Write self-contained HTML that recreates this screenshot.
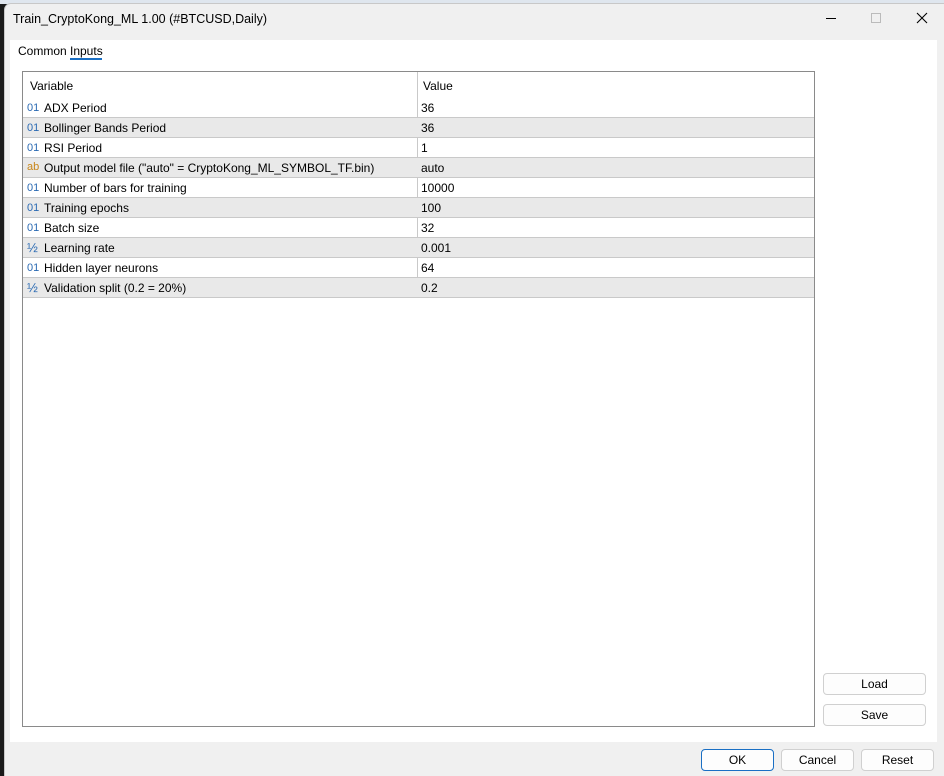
<!DOCTYPE html>
<html><head><meta charset="utf-8"><style>
*{box-sizing:border-box;margin:0;padding:0}
body{width:944px;height:776px;position:relative;overflow:hidden;background:#1a1a1a;font-family:"Liberation Sans",Arial,sans-serif;font-size:12px;color:#000}
.top{position:absolute;left:0;top:0;width:944px;height:4px;background:#dfe6ee}
.win{position:absolute;left:4px;top:3px;width:940px;height:773px;background:#f0f0f0;border-top-left-radius:7px;border:1px solid #c8c8c8;border-right:none;border-bottom:none}
.title{position:absolute;left:13px;top:12px;font-size:12.5px}
.panel{position:absolute;left:10px;top:40px;width:927px;height:702px;background:#fff}
.tab{position:absolute;top:44px;font-size:12px}
.ul{position:absolute;left:70px;top:58px;width:32px;height:2px;background:#1a6fc4}
.table{position:absolute;left:22px;top:71px;width:793px;height:656px;border:1px solid #8a8a8a;background:#fff}
.hdr{height:25px;position:relative}
.hdr span{position:absolute;top:7px}
.row{height:20px;border-bottom:1px solid #c9c9c9;position:relative;width:791px}
.row.g{background:#e9e9e9}
.row span{position:absolute;top:3px}
.row span.ic{left:4px;color:#2a6ab3;font-size:11px;top:4px}
.row span.ab{color:#c8861a;top:3px}
.nm{left:21px}
.vl{left:398px}
.vdiv{position:absolute;left:394px;top:0;width:1px;height:225px;background:#c9c9c9}
.btn{position:absolute;height:22px;border:1px solid #d0d0d0;border-radius:4px;background:#fdfdfd;text-align:center;line-height:20px;font-size:12px}
</style></head><body>
<div class="top"></div>
<div class="win"></div>
<div class="title">Train_CryptoKong_ML 1.00 (#BTCUSD,Daily)</div>
<div style="position:absolute;left:826px;top:18px;width:10px;height:1px;background:#000"></div>
<div style="position:absolute;left:871px;top:13px;width:10px;height:10px;border:1px solid #bbb"></div>
<svg style="position:absolute;left:916px;top:12px" width="12" height="12"><path d="M1 1L11 11M11 1L1 11" stroke="#000" stroke-width="1.1"/></svg>
<div class="panel"></div>
<div class="tab" style="left:18px">Common</div>
<div class="tab" style="left:70px">Inputs</div>
<div class="ul"></div>
<div class="table">
<div class="vdiv"></div>
<div class="hdr"><span style="left:7px">Variable</span><span style="left:400px">Value</span></div>
<div style="height:1px"></div>
<div class="row"><span class="ic">01</span><span class="nm">ADX Period</span><span class="vl">36</span></div>
<div class="row g"><span class="ic">01</span><span class="nm">Bollinger Bands Period</span><span class="vl">36</span></div>
<div class="row"><span class="ic">01</span><span class="nm">RSI Period</span><span class="vl">1</span></div>
<div class="row g"><span class="ic ab">ab</span><span class="nm">Output model file ("auto" = CryptoKong_ML_SYMBOL_TF.bin)</span><span class="vl">auto</span></div>
<div class="row"><span class="ic">01</span><span class="nm">Number of bars for training</span><span class="vl">10000</span></div>
<div class="row g"><span class="ic">01</span><span class="nm">Training epochs</span><span class="vl">100</span></div>
<div class="row"><span class="ic">01</span><span class="nm">Batch size</span><span class="vl">32</span></div>
<div class="row g"><span class="ic" style="font-size:13px;top:2px">½</span><span class="nm">Learning rate</span><span class="vl">0.001</span></div>
<div class="row"><span class="ic">01</span><span class="nm">Hidden layer neurons</span><span class="vl">64</span></div>
<div class="row g"><span class="ic" style="font-size:13px;top:2px">½</span><span class="nm">Validation split (0.2 = 20%)</span><span class="vl">0.2</span></div>
</div>
<div class="btn" style="left:823px;top:673px;width:103px">Load</div>
<div class="btn" style="left:823px;top:704px;width:103px">Save</div>
<div class="btn" style="left:701px;top:749px;width:73px;border:1px solid #1a6fc4">OK</div>
<div class="btn" style="left:781px;top:749px;width:73px">Cancel</div>
<div class="btn" style="left:861px;top:749px;width:73px">Reset</div>
</body></html>
